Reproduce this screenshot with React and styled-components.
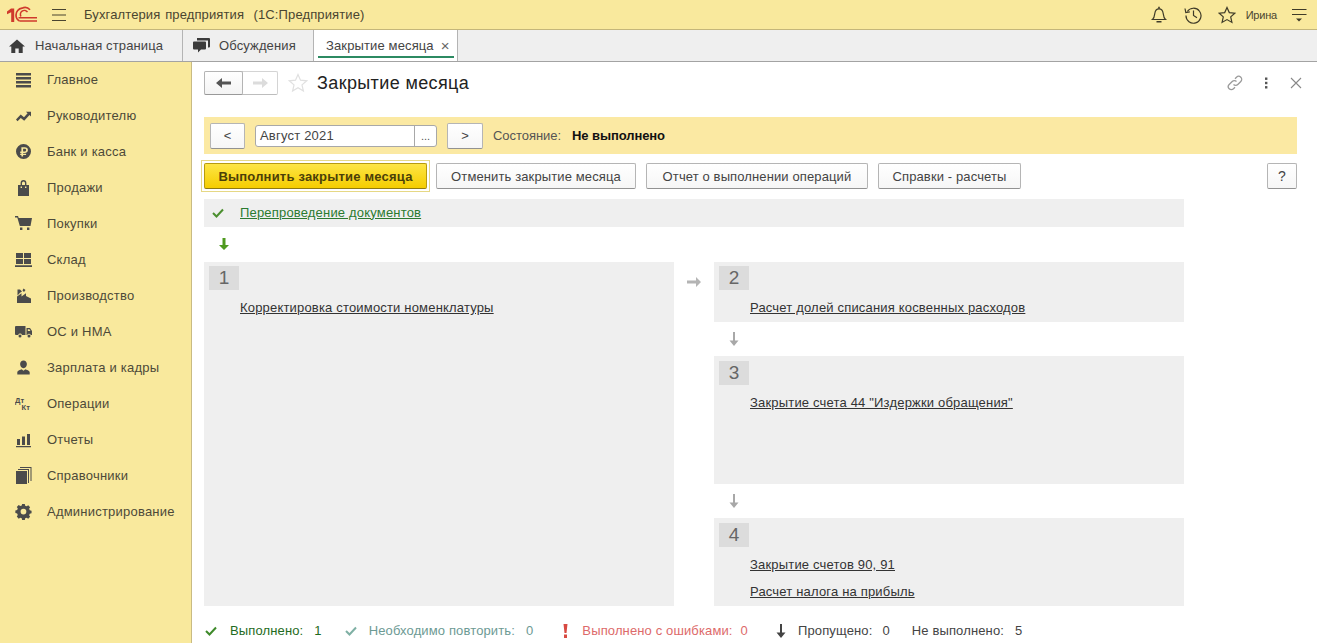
import React from 'react';
import styled, { createGlobalStyle } from 'styled-components';

const Global = createGlobalStyle`
  html, body { margin: 0; padding: 0; height: 100%; overflow: hidden; background: #fff; }
  body { font-family: "Liberation Sans", Arial, sans-serif; font-size: 13px; color: #333; }
  #root { height: 643px; }
`;

const Page = styled.div`display: flex; flex-direction: column; width: 1317px; height: 643px; overflow: hidden;`;

const TopBar = styled.header`
  display: flex; align-items: center; height: 29px; flex: none; background: #f9e99d;
  border-bottom: 1px solid #c4b67a; padding: 0 10px 0 7px; color: #4a4530;
`;
const Logo = styled.svg`width: 30px; height: 18px; flex: none;`;
const Burger = styled.svg`width: 16px; height: 14px; margin-left: 14px; flex: none;`;
const AppTitle = styled.div`margin-left: 17px; font-size: 13px; word-spacing: 1px; letter-spacing: .12px; flex: 1; white-space: pre;`;
const TopIcons = styled.div`display: flex; align-items: center; gap: 16px;`;
const TopIcon = styled.svg`width: 18px; height: 18px; display: block;`;
const UserName = styled.span`font-size: 11px; letter-spacing: -.2px; color: #4a4530; margin-left: -6px;`;
const Lines = styled.svg`width: 16px; height: 16px; margin-left: -2px; display: block;`;

const TabBar = styled.nav`
  display: flex; height: 31px; flex: none; background: #efefef; border-bottom: 1px solid #a3a3a3; box-sizing: content-box;
`;
const Tab = styled.div`
  position: relative; display: flex; align-items: center; width: ${p => p.$w}px; box-sizing: border-box;
  padding-left: ${p => p.$pad}px; border-right: 1px solid #b4b4b4; background: ${p => p.$active ? '#fff' : 'transparent'};
  color: #444; font-size: 13px; letter-spacing: .13px;
  svg { flex: none; }
`;
const TabUnderline = styled.span`position: absolute; left: 4px; right: 3px; bottom: 3px; height: 2px; background: #2c8a62;`;
const TabClose = styled.span`margin-left: 7px; font-size: 15px; line-height: 13px; color: #666;`;

const Body = styled.div`display: flex; flex: 1; min-height: 0;`;
const Sidebar = styled.aside`
  width: 191px; flex: none; background: #f9e99d; border-right: 1px solid #c9bb83; box-sizing: content-box;
`;
const MenuItem = styled.div`
  display: flex; align-items: center; height: 36px; padding-left: 15px; color: #4d4939; font-size: 13px; letter-spacing: .22px;
  &:first-child { margin-top: -1px; }
`;
const MenuIcon = styled.svg`width: 17px; height: 17px; flex: none; margin-right: 15px; fill: #4b4b4b;`;

const Main = styled.main`flex: 1; min-width: 0; padding: 9px 20px 0 12px; background: #fff; display: flex; flex-direction: column;`;
const FormHead = styled.div`display: flex; align-items: center; height: 24px;`;
const NavGroup = styled.div`
  display: flex; width: 74px; height: 24px; box-sizing: border-box; border: 1px solid #d4d4d4; border-bottom-color: #bdbdbd; border-radius: 2px; background: #fff;
`;
const NavBtn = styled.div`
  flex: ${p => p.$first ? '0 0 37px' : 1}; display: flex; align-items: center; justify-content: center;
  ${p => p.$first ? 'border: 1px solid #b4b4b4; border-bottom-color: #999; margin: -1px 0 -1px -1px; border-radius: 2px; background: linear-gradient(#fff,#f4f4f4);' : ''}
`;
const FormTitle = styled.h1`margin: 0 0 0 9px; font-weight: 400; font-size: 18px; letter-spacing: .38px; color: #222; flex: 1;`;
const FormTools = styled.div`display: flex; align-items: center; gap: 15px; margin-right: -6px;`;

const StateBand = styled.div`
  display: flex; align-items: center; height: 37px; margin-top: 22px; background: #fbe9a3; padding-left: 6px;
`;
const Btn = styled.button`
  height: 26px; box-sizing: border-box; padding: 0; width: ${p => p.$w}px; flex: none; font: inherit; font-size: 13px; letter-spacing: .12px; color: #444;
  background: linear-gradient(#fff, #f6f6f6); border: 1px solid #b5b5b5; border-bottom-color: #929292; border-radius: 2px;
`;
const DateField = styled.div`
  display: flex; width: 182px; height: 22px; margin: 0 10px; box-sizing: border-box; background: #fff;
  border: 1px solid #a8a8a8; border-radius: 3px;
`;
const DateText = styled.div`flex: 1; padding-left: 4px; line-height: 20px; color: #444; font-size: 13px; letter-spacing: .2px;`;
const DateDots = styled.div`width: 21px; border-left: 1px solid #a8a8a8; text-align: center; line-height: 20px; color: #555; font-size: 11px;`;
const StateLabel = styled.span`margin-left: 10px; color: #555; font-size: 13px; letter-spacing: -.05px;`;
const StateValue = styled.b`margin-left: 11px; color: #111; font-size: 13px; letter-spacing: -.08px;`;

const Actions = styled.div`display: flex; align-items: center; gap: 10px; margin-top: 9px; height: 26px;`;
const PrimaryWrap = styled.div`
  flex: none; margin: -3px -4px -3px -3px; border: 1px solid #e6d885; padding: 2px; display: flex;
`;
const Primary = styled.button`
  width: 223px; height: 26px; box-sizing: border-box; font: inherit; font-weight: 700; font-size: 13px; color: #4b3f08; padding: 0; letter-spacing: .2px;
  background: linear-gradient(#fde545, #f5cd00); border: 1px solid #b69a10; border-bottom-color: #8f7a10; border-radius: 2px;
`;
const HelpBtn = styled(Btn)`margin-left: auto; font-size: 14px;`;

const Flow = styled.div`width: 980px; margin-top: 10px;`;
const DoneRow = styled.div`display: flex; align-items: center; height: 28px; background: #efefef;`;
const DoneIcon = styled.svg`width: 12px; height: 12px; margin: 0 0 0 8px;`;
const DoneLink = styled.a`margin: -2px 0 0 16px; color: #2b7a30; text-decoration: underline; letter-spacing: .18px;`;
const ArrowRow = styled.div`display: flex; align-items: center; height: 35px; box-sizing: border-box; padding: 0 0 2px ${p => p.$pad}px;`;

const Steps = styled.div`display: grid; grid-template-columns: 470px 40px 470px; height: 344px;`;
const Panel = styled.section`background: #efefef; padding: ${p => p.$pt ?? 4}px 0 0 5px; box-sizing: border-box; height: ${p => p.$h ? p.$h + 'px' : '100%'};`;
const NumBadge = styled.div`width: 30px; height: 24px; background: #dcdcdc; color: #666; font-size: 19px; line-height: 24px; text-align: center;`;
const StepLink = styled.a`display: block; margin: 9px 0 0 31px; color: #333; text-decoration: underline; line-height: 18px; letter-spacing: .18px;`;
const Middle = styled.div`display: flex; align-items: flex-start; justify-content: center; padding-top: 15px;`;
const Right = styled.div`display: flex; flex-direction: column;`;
const DownGap = styled.div`display: flex; align-items: center; height: 34px; padding-left: 15px;`;

const Footer = styled.footer`display: flex; align-items: flex-start; height: 37px; padding-top: 17px; box-sizing: border-box; font-size: 13px; line-height: 16px; letter-spacing: .13px;`;
const Stat = styled.div`
  display: flex; align-items: center; height: 16px; color: ${p => p.$c}; margin-right: ${p => p.$mr}px; white-space: pre;
  svg { margin: 0 ${p => p.$ig ?? 11}px 0 ${p => p.$il ?? 0}px; }
`;
const StatNum = styled.span`margin-left: ${p => p.$g ?? 11}px;`;

const ic = {
  main: <path d="M1 2h15v2.400H1zM1 6h15v2.400H1zM1 10h15v2.400H1zM1 14h15v2.400H1z" />,
  trend: <path d="M1 12.500l4.700-5 3.300 2.800 3.600-4-1.700-1.600H16v4.800l-1.500-1.500-5.300 5.700-3.400-2.800-3.300 3.400z" />,
  bank: <path fillRule="evenodd" d="M8.500 1a7.500 7.500 0 1 1 0 15 7.500 7.500 0 0 1 0-15zM6.400 4.300v4.200H5.200v1.400h1.200v.9H5.200v1.300h1.200v1.500h1.700v-1.500h3v-1.300h-3v-.9h1.600c2.100 0 3.200-1.200 3.200-2.900s-1.100-2.700-3.200-2.700zm1.700 1.400h1.500c1 0 1.500.5 1.500 1.300 0 .9-.5 1.500-1.500 1.500H8.100z" />,
  bag: <path fillRule="evenodd" d="M3 6h2.600V4a2.900 2.900 0 0 1 5.800 0v2H14v11H3zM7 6h3V4a1.500 1.500 0 0 0-3 0zM5.600 7.600V9H7V7.600zM10 7.600V9h1.400V7.600z" />,
  cart: <path d="M0 1h3l.7 2H17l-1.500 8H4.800L2.300 2.600H0zM5 12.500h2.400V15H5zM12 12.500h2.400V15H12z" />,
  store: <path d="M1 2h7v5H1zM9 2h7v5H9zM1 8h7v5H1zM9 8h7v5H9zM0 14.300h17V16H0z" />,
  factory: <path d="M2 16V9.500l4.500-3.300V9.500l4.500-3.300V9l5 2.500V16zM2.500 8.500V2.500H5L7 4.500 5 5.800 3 8zM8.500 1.500l2 1.500-1.500 2-1.500-1.500z" />,
  truck: <path fillRule="evenodd" d="M0 4a1 1 0 0 1 1-1h9.500v9H7a2 2 0 0 0-3.800 0H1a1 1 0 0 1-1-1zM11.500 5H15l2 3v4h-1.200a2 2 0 0 0-3.600 0h-.7zM12.800 6.200V8H15.500l-1.100-1.800zM5 11.600a1.500 1.500 0 1 1 0 3 1.500 1.500 0 0 1 0-3zM14 11.600a1.500 1.500 0 1 1 0 3 1.500 1.500 0 0 1 0-3z" />,
  user: <path d="M8.500 1.500c2 0 3.400 1.500 3.400 3.600S10.500 9.300 8.500 9.300 5.100 7.200 5.100 5.100 6.500 1.500 8.500 1.500zM2.300 15.500v-2.300c0-1.500 3.300-2.600 4.300-3l1.900 1.600 1.900-1.600c1 .4 4.300 1.500 4.300 3v2.300z" />,
  bars: <path d="M2 8h3v6H2zM7 5.500h3V14H7zM12 3h3v11h-3zM1 15h15v1.200H1z" />,
  book: <path d="M1 4h11v13H1zM13 3v13h1V2H3v1zM15.500 1v13h1V0H5v1z" />,
  gear: <path fillRule="evenodd" d="M7 1h3l.4 2 1.600.7 1.800-1.100 2.100 2.100-1.100 1.800.7 1.600 2 .4v3l-2 .4-.7 1.600 1.100 1.800-2.100 2.100-1.800-1.100-1.600.7-.4 2H7l-.4-2-1.600-.7-1.800 1.100L1.100 15l1.100-1.800-.7-1.600-2-.4V8.200l2-.4.7-1.600L1.100 4.400 3.200 2.300 5 3.400l1.600-.7zM8.500 6.300a3.200 3.200 0 1 0 0 6.400 3.200 3.200 0 0 0 0-6.400z" transform="scale(.9) translate(.9 0)" />,
};

const menu = [
  ['Главное', ic.main], ['Руководителю', ic.trend], ['Банк и касса', ic.bank], ['Продажи', ic.bag],
  ['Покупки', ic.cart], ['Склад', ic.store], ['Производство', ic.factory], ['ОС и НМА', ic.truck],
  ['Зарплата и кадры', ic.user],
  ['Операции', <text key="t"><tspan x="0" y="8" fontSize="7.500" fontWeight="700">Дт</tspan><tspan x="6.500" y="15" fontSize="7.500" fontWeight="700">Кт</tspan></text>],
  ['Отчеты', ic.bars], ['Справочники', ic.book], ['Администрирование', ic.gear],
];

const ArrowDown = ({ c }) => (
  <svg width="10" height="12" viewBox="0 0 10 12"><path d="M3.500 0h3v7H10l-5 5-5-5h3.500z" fill={c} /></svg>
);
const ArrowThin = ({ c }) => (
  <svg width="10" height="14" viewBox="0 0 10 14"><path d="M4 0h2v8.500h3.500L5 14 .5 8.500H4z" fill={c} /></svg>
);
const Check = ({ c }) => (
  <svg width="12" height="10" viewBox="0 0 12 10"><path d="M1 5l3.500 3.500L11 1.500" fill="none" stroke={c} strokeWidth="2" /></svg>
);

export default function App() {
  return (
    <Page>
      <Global />
      <TopBar>
        <Logo viewBox="0 0 30 18">
          <path d="M0 5.500L4 2.500h3.200V16H4.200V6.300L0 8.300z" fill="#cf3a2c" />
          <path d="M23 3.800A6.800 6.800 0 0 0 15 2.200a6.800 6.800 0 0 0-6 6.800c0 3 1.500 5 3.500 6" fill="none" stroke="#cf3a2c" strokeWidth="1.700" />
          <path d="M20.500 6.200A3.600 3.600 0 1 0 14 10.500" fill="none" stroke="#cf3a2c" strokeWidth="1.500" />
          <path d="M11.500 11.800H30M12.500 15H30" stroke="#cf3a2c" strokeWidth="1.500" />
        </Logo>
        <Burger viewBox="0 0 16 14"><path d="M1 1.500h14M1 7h14M1 12.500h14" stroke="#4a4530" strokeWidth="1.200" /></Burger>
        <AppTitle>Бухгалтерия предприятия  (1С:Предприятие)</AppTitle>
        <TopIcons>
          <TopIcon viewBox="0 0 18 18" fill="none" stroke="#3f3b28" strokeWidth="1.200">
            <path d="M2.500 13.500c1.800-1.500 2-3.500 2.300-6 .3-2.400 1.900-4.700 4.200-4.700s3.900 2.300 4.200 4.700c.3 2.500.5 4.500 2.300 6z" />
            <path d="M9 .8v2M6.500 15.800h5" strokeWidth="1.600" />
          </TopIcon>
          <TopIcon viewBox="0 0 18 18" fill="none" stroke="#3f3b28" strokeWidth="1.200">
            <path d="M3.300 5.500A7.500 7.500 0 1 1 2 9.500" />
            <path d="M1 2.500l.8 4 4-.7" />
            <path d="M9.500 4.500v5l3.500 2.300" />
          </TopIcon>
          <TopIcon viewBox="0 0 18 18" fill="none" stroke="#3f3b28" strokeWidth="1.200">
            <path d="M9 1.500l2.300 5.100 5.500.6-4.100 3.700 1.200 5.500L9 13.600l-4.900 2.800 1.200-5.500-4.100-3.700 5.500-.6z" />
          </TopIcon>
          <UserName>Ирина</UserName>
          <Lines viewBox="0 0 16 16"><path d="M1 2.500h14.500M1 7.500h14.500" stroke="#3f3b28" strokeWidth="1.100" /><path d="M5 11.500h6L8 14.500z" fill="#3f3b28" /></Lines>
        </TopIcons>
      </TopBar>
      <TabBar>
        <Tab $w={183} $pad={9}>
          <svg width="16" height="14" viewBox="0 0 16 14" style={{ marginRight: 10 }}><path d="M8 .5L16 7.500h-2.300V14H9.700V9.500H6.300V14H2.300V7.500H0z" fill="#3c3c3c" /></svg>
          Начальная страница
        </Tab>
        <Tab $w={131} $pad={10}>
          <svg width="17" height="15" viewBox="0 0 17 15" style={{ marginRight: 9 }}><path d="M4 0h12a1 1 0 0 1 1 1v7.500a1 1 0 0 1-1 1h-1V2.500H4z" fill="#3c3c3c" /><path d="M1 3.500h11a1 1 0 0 1 1 1v6a1 1 0 0 1-1 1H8l-3 3v-3H1a1 1 0 0 1-1-1v-6a1 1 0 0 1 1-1z" fill="#3c3c3c" /></svg>
          Обсуждения
        </Tab>
        <Tab $w={144} $pad={12} $active>
          Закрытие месяца<TabClose>×</TabClose>
          <TabUnderline />
        </Tab>
      </TabBar>
      <Body>
        <Sidebar>
          {menu.map(([label, icon]) => (
            <MenuItem key={label}>
              <MenuIcon viewBox="0 0 17 17">{icon}</MenuIcon>
              {label}
            </MenuItem>
          ))}
        </Sidebar>
        <Main>
          <FormHead>
            <NavGroup>
              <NavBtn $first><svg width="16" height="10" viewBox="0 0 16 10"><path d="M0 5l6-5v3.500h9v3H6V10z" fill="#555" /></svg></NavBtn>
              <NavBtn><svg width="16" height="10" viewBox="0 0 16 10"><path d="M16 5l-6-5v3.500H1v3h9V10z" fill="#dcdcdc" /></svg></NavBtn>
            </NavGroup>
            <svg width="20" height="20" viewBox="0 0 20 20" style={{ marginLeft: 10 }} fill="none" stroke="#e0e0e0" strokeWidth="1.200"><path d="M10 1.500l2.500 5.700 6.200.6-4.700 4.100 1.400 6.100L10 14.800l-5.400 3.200L6 11.900 1.300 7.800l6.200-.6z" /></svg>
            <FormTitle>Закрытие месяца</FormTitle>
            <FormTools>
              <svg width="16" height="16" viewBox="0 0 16 16" fill="none" stroke="#9a9a9a" strokeWidth="1.300"><path d="M6.500 9.500a3 3 0 0 0 4.300 0l3-3a3 3 0 0 0-4.300-4.300L8 3.700" /><path d="M9.500 6.500a3 3 0 0 0-4.300 0l-3 3a3 3 0 0 0 4.300 4.300L8 12.300" /></svg>
              <svg width="16" height="16" viewBox="0 0 16 16" fill="#555"><rect x="7" y="2.500" width="2.400" height="2.400" /><rect x="7" y="6.800" width="2.400" height="2.400" /><rect x="7" y="11.100" width="2.400" height="2.400" /></svg>
              <svg width="14" height="14" viewBox="0 0 14 14" stroke="#888" strokeWidth="1.100"><path d="M2 2l10 10M12 2L2 12" /></svg>
            </FormTools>
          </FormHead>
          <StateBand>
            <Btn $w={35}>&lt;</Btn>
            <DateField><DateText>Август 2021</DateText><DateDots>...</DateDots></DateField>
            <Btn $w={36}>&gt;</Btn>
            <StateLabel>Состояние:</StateLabel>
            <StateValue>Не выполнено</StateValue>
          </StateBand>
          <Actions>
            <PrimaryWrap><Primary>Выполнить закрытие месяца</Primary></PrimaryWrap>
            <Btn $w={200}>Отменить закрытие месяца</Btn>
            <Btn $w={222}>Отчет о выполнении операций</Btn>
            <Btn $w={143}>Справки - расчеты</Btn>
            <HelpBtn $w={30}>?</HelpBtn>
          </Actions>
          <Flow>
            <DoneRow>
              <DoneIcon viewBox="0 0 12 12"><path d="M1 6l3.500 3.500L11 2.500" fill="none" stroke="#4b8f2f" strokeWidth="2" /></DoneIcon>
              <DoneLink>Перепроведение документов</DoneLink>
            </DoneRow>
            <ArrowRow $pad={15}><ArrowDown c="#4f9a1f" /></ArrowRow>
            <Steps>
              <Panel>
                <NumBadge>1</NumBadge>
                <StepLink>Корректировка стоимости номенклатуры</StepLink>
              </Panel>
              <Middle><svg width="14" height="10" viewBox="0 0 14 10"><path d="M14 5L9 0v3.500H0v3h9V10z" fill="#b4b4b4" /></svg></Middle>
              <Right>
                <Panel $h={60}>
                  <NumBadge>2</NumBadge>
                  <StepLink>Расчет долей списания косвенных расходов</StepLink>
                </Panel>
                <DownGap><ArrowThin c="#a8a8a8" /></DownGap>
                <Panel $h={128} $pt={5}>
                  <NumBadge>3</NumBadge>
                  <StepLink>Закрытие счета 44 "Издержки обращения"</StepLink>
                </Panel>
                <DownGap><ArrowThin c="#a8a8a8" /></DownGap>
                <Panel $h={88} $pt={5}>
                  <NumBadge>4</NumBadge>
                  <StepLink>Закрытие счетов 90, 91</StepLink>
                  <StepLink>Расчет налога на прибыль</StepLink>
                </Panel>
              </Right>
            </Steps>
          </Flow>
          <Footer>
            <Stat $c="#1f6b22" $mr={23} $il={1} $ig={13}><Check c="#3e8a2a" />Выполнено:<StatNum>1</StatNum></Stat>
            <Stat $c="#6d9a94" $mr={30} $ig={12}><Check c="#7fb0a4" />Необходимо повторить:<StatNum>0</StatNum></Stat>
            <Stat $c="#dd6a6a" $mr={28} $ig={14}>
              <svg width="5" height="14" viewBox="0 0 5 14"><path d="M.5 0h4L3.500 9h-2zM1 10.500h3V14H1z" fill="#d84a42" /></svg>
              Выполнено с ошибками:<StatNum $g={8}>0</StatNum>
            </Stat>
            <Stat $c="#444" $mr={22} $ig={12}><ArrowThin c="#444" />Пропущено:<StatNum $g={10}>0</StatNum></Stat>
            <Stat $c="#444" $mr={0} $ig={0}>Не выполнено:<StatNum>5</StatNum></Stat>
          </Footer>
        </Main>
      </Body>
    </Page>
  );
}
